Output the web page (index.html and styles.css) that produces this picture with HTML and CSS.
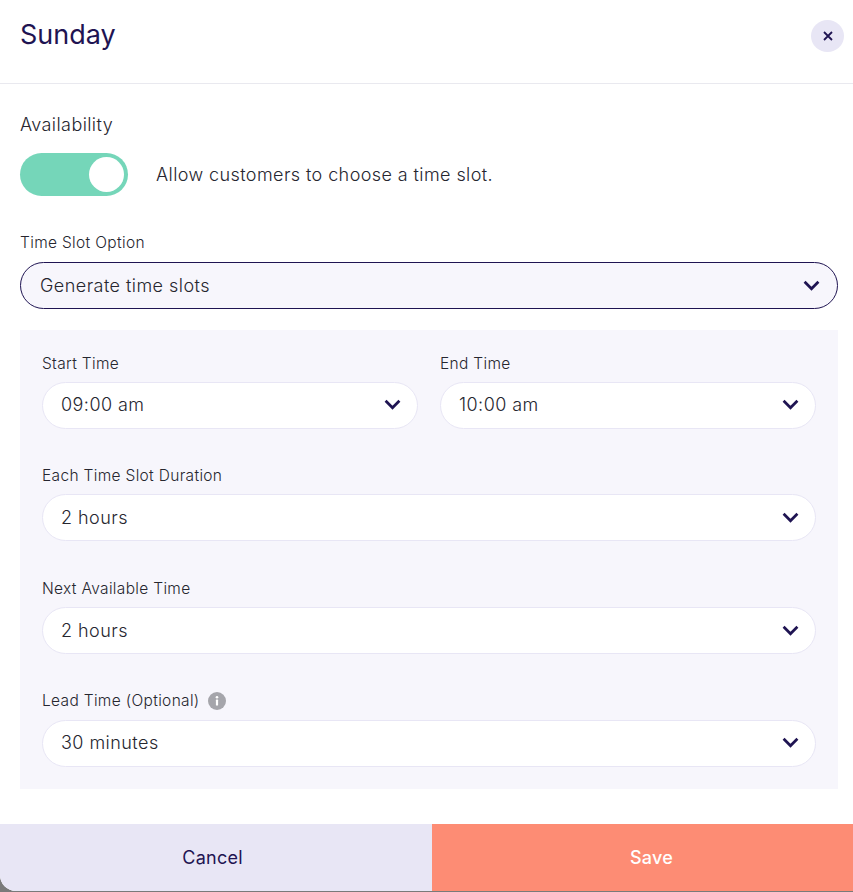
FILE: index.html
```html
<!DOCTYPE html>
<html lang="en">
<head>
<meta charset="utf-8">
<title>Sunday</title>
<link rel="stylesheet" href="styles.css">
</head>
<body>
<div class="modal">
  <header class="head">
    <h1 class="title">Sunday</h1>
    <button class="close" aria-label="Close">
      <svg width="10" height="10" viewBox="0 0 10 10"><path d="M1 1l8 8M9 1L1 9" class="x"/></svg>
    </button>
  </header>
  <main class="body">
    <div class="avail-label">Availability</div>
    <div class="avail-row">
      <span class="toggle"><span class="knob"></span></span>
      <span class="avail-text">Allow customers to choose a time slot.</span>
    </div>
    <label class="label label-top">Time Slot Option</label>
    <div class="select select-main"><span>Generate time slots</span><svg class="chev" viewBox="0 0 16 10"><path d="M1.5 1.5L8 8l6.5-6.5"/></svg></div>
    <section class="panel">
      <div class="two">
        <div class="field">
          <label class="label">Start Time</label>
          <div class="select"><span>09:00 am</span><svg class="chev" viewBox="0 0 16 10"><path d="M1.5 1.5L8 8l6.5-6.5"/></svg></div>
        </div>
        <div class="field">
          <label class="label">End Time</label>
          <div class="select"><span>10:00 am</span><svg class="chev" viewBox="0 0 16 10"><path d="M1.5 1.5L8 8l6.5-6.5"/></svg></div>
        </div>
      </div>
      <div class="field">
        <label class="label">Each Time Slot Duration</label>
        <div class="select"><span>2 hours</span><svg class="chev" viewBox="0 0 16 10"><path d="M1.5 1.5L8 8l6.5-6.5"/></svg></div>
      </div>
      <div class="field">
        <label class="label">Next Available Time</label>
        <div class="select"><span>2 hours</span><svg class="chev" viewBox="0 0 16 10"><path d="M1.5 1.5L8 8l6.5-6.5"/></svg></div>
      </div>
      <div class="field">
        <label class="label label-info">Lead Time (Optional)
          <svg class="info" viewBox="0 0 18 18"><circle cx="9" cy="9" r="9" fill="#a5a5ab"/><circle cx="9" cy="5.2" r="1.3" fill="#fff"/><rect x="7.9" y="7.6" width="2.2" height="6" rx=".6" fill="#fff"/></svg>
        </label>
        <div class="select"><span>30 minutes</span><svg class="chev" viewBox="0 0 16 10"><path d="M1.5 1.5L8 8l6.5-6.5"/></svg></div>
      </div>
    </section>
  </main>
  <footer class="foot">
    <button class="btn cancel">Cancel</button>
    <button class="btn save">Save</button>
  </footer>
</div>
</body>
</html>
```

FILE: styles.css
```css
* { box-sizing: border-box; }
html, body { margin: 0; padding: 0; }
body {
  width: 853px;
  height: 892px;
  background: #7a7a7a;
  font-family: "Inter", "Liberation Sans", sans-serif;
  font-weight: 300;
  color: #26262f;
  overflow: hidden;
}
.modal {
  width: 853px;
  height: 891px;
  background: #fff;
  border-bottom-left-radius: 16px;
  overflow: hidden;
  display: flex;
  flex-direction: column;
}
.head {
  height: 84px;
  flex: none;
  border-bottom: 1px solid #e9e9ef;
  display: flex;
  justify-content: space-between;
  align-items: flex-start;
  padding: 20px 9px 0 20px;
}
.title {
  margin: 0;
  font-size: 27px;
  line-height: 30px;
  font-weight: 400;
  color: #1f1452;
}
.close {
  width: 33px;
  height: 32px;
  border: 0;
  padding: 0;
  border-radius: 50%;
  background: #e8e6f5;
  display: flex;
  align-items: center;
  justify-content: center;
}
.x { stroke: #1f1452; stroke-width: 1.8; fill: none; }
.body {
  flex: 1;
  padding: 30px 15px 0 20px;
}
.avail-label {
  font-size: 18px;
  line-height: 22px;
  letter-spacing: 0.41px;
}
.avail-row {
  display: flex;
  align-items: center;
  gap: 28px;
  margin-top: 17px;
}
.toggle {
  width: 108px;
  height: 43px;
  border-radius: 22px;
  background: #75d6b9;
  display: flex;
  justify-content: flex-end;
  align-items: center;
  padding-right: 4px;
}
.knob {
  width: 35px;
  height: 35px;
  border-radius: 50%;
  background: #fff;
}
.avail-text {
  font-size: 18px;
  line-height: 22px;
  letter-spacing: 0.41px;
}
.label {
  display: block;
  font-size: 15.5px;
  line-height: 20px;
  letter-spacing: 0.33px;
  margin-bottom: 8px;
}
.label-top { margin-top: 37px; margin-bottom: 9px; }
.label-info {
  display: flex;
  align-items: center;
  gap: 8px;
  line-height: 18px;
  margin-bottom: 10px;
}
.info { width: 18px; height: 18px; }
.select {
  height: 47px;
  border: 1px solid #e8e6f5;
  border-radius: 24px;
  background: #fff;
  display: flex;
  align-items: center;
  justify-content: space-between;
  padding: 0 16.5px 1px 18px;
  font-size: 18px;
  letter-spacing: 0.45px;
}
.select-main {
  background: #f7f6fc;
  border-color: #1f1452;
  padding: 0 17px 0 19px;
}
.chev { width: 17px; height: 11px; flex: none; }
.chev path { fill: none; stroke: #1f1452; stroke-width: 2.6; }
.panel {
  margin-top: 21px;
  background: #f7f6fc;
  padding: 23.7px 22px 22px;
  display: flex;
  flex-direction: column;
  gap: 37.67px;
}
.two {
  display: grid;
  grid-template-columns: 376px 376px;
  gap: 22px;
}
.foot {
  flex: none;
  height: 67px;
  display: flex;
}
.btn {
  border: 0;
  font: inherit;
  font-size: 18px;
  letter-spacing: 0.25px;
  padding: 0;
}
.cancel { width: 432px; background: #e8e6f5; color: #1f1452; font-weight: 400; padding-right: 7px; }
.save { flex: 1; background: #fd8c74; color: #fff; font-weight: 500; padding-left: 18px; }
```
